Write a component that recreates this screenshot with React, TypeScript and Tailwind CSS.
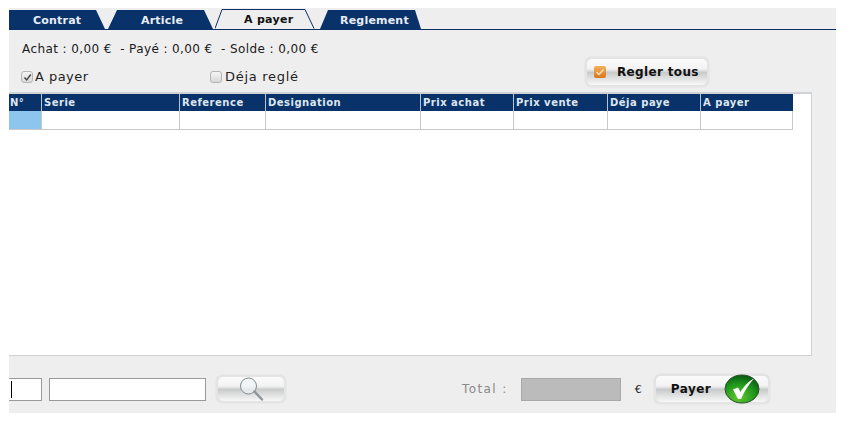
const font = "font-['DejaVu_Sans',sans-serif]";

const glossy =
  "bg-[linear-gradient(to_bottom,#fbfbfb_0%,#f3f3f3_38%,#c9cbcb_52%,#d9dada_68%,#f8f8f8_100%)] border-2 border-[#e4e4e4] rounded-[7px] shadow-[0_0_1px_#bbbbbb]";

const columns = [
  { label: "N°", w: "w-[32px]" },
  { label: "Serie", w: "w-[138px]" },
  { label: "Reference", w: "w-[86px]" },
  { label: "Designation", w: "w-[155px]" },
  { label: "Prix achat", w: "w-[93px]" },
  { label: "Prix vente", w: "w-[94px]" },
  { label: "Déja paye", w: "w-[93px]" },
  { label: "A payer", w: "w-[93px]" },
];

function Tabs() {
  return (
    <div className="flex h-[22px] shrink-0 items-end border-b border-[#0c2f66]">
      <div className="flex h-[19px] w-[96px] items-center bg-[#083269] pl-6 pt-[3px] text-[11px] font-bold tracking-[0.2px] text-[#e8edf4] [clip-path:polygon(0_0,87px_0,100%_100%,0_100%)]">
        Contrat
      </div>
      <div className="ml-[3px] flex h-[19px] w-[105px] items-center bg-[#083269] pl-[33px] pt-[3px] text-[11px] font-bold tracking-[0.2px] text-[#e8edf4] [clip-path:polygon(9px_0,96px_0,100%_100%,0_100%)]">
        Article
      </div>
      <div className="relative ml-[2px] flex h-5 w-[100px] items-center pl-[29px] pt-[3px] text-[11px] font-bold tracking-[0.3px] text-[#111111]">
        <svg className="absolute left-0 top-0" width="100" height="20" viewBox="0 0 100 20" fill="none">
          <path d="M0 19.5 L7 0.5 H90 L99 19.5" stroke="#0c2f66" strokeWidth="1" />
        </svg>
        A payer
      </div>
      <div className="ml-[5px] flex h-[19px] w-[101px] items-center bg-[#083269] pl-[20px] pt-[3px] text-[11px] font-bold tracking-[0.2px] text-[#e8edf4] [clip-path:polygon(8px_0,95px_0,100%_100%,0_100%)]">
        Reglement
      </div>
    </div>
  );
}

function CheckMark({ checked, className }: { checked?: boolean; className: string }) {
  return (
    <span
      className={`flex h-3 w-3 items-center justify-center rounded-[3px] border border-[#b5b5b5] bg-[linear-gradient(to_bottom,#f4f4f4,#d8d8d8)] ${className}`}
    >
      {checked && (
        <svg width="9" height="9" viewBox="0 0 9 9" fill="none">
          <path d="M1.5 4.5 L3.7 7 L7.8 1.5" stroke="#444444" strokeWidth="1.4" />
        </svg>
      )}
    </span>
  );
}

function OrangeCheck() {
  return (
    <svg width="14" height="14" viewBox="0 0 14 14" fill="none">
      <defs>
        <linearGradient id="orange" x1="0" y1="0" x2="0" y2="1">
          <stop offset="0" stopColor="#f2b25c" />
          <stop offset="1" stopColor="#d9771f" />
        </linearGradient>
      </defs>
      <rect x="1" y="1" width="12" height="12" rx="2" fill="url(#orange)" />
      <path d="M3.5 7 L6 9.5 L10.5 4.5" stroke="#fbe3c0" strokeWidth="1.5" />
    </svg>
  );
}

function GreenCheck() {
  return (
    <svg width="36" height="30" viewBox="0 0 36 30" fill="none">
      <defs>
        <radialGradient id="green" cx="0.4" cy="0.8" r="0.8">
          <stop offset="0" stopColor="#63c82f" />
          <stop offset="0.6" stopColor="#1f981c" />
          <stop offset="1" stopColor="#075a10" />
        </radialGradient>
      </defs>
      <ellipse cx="18" cy="15" rx="17" ry="14" fill="url(#green)" stroke="#2c4f2c" strokeWidth="1" />
      <path d="M9 15.5 L14 13.5 L16.5 18 C20 12 25 7 30 4.5 C25 10 20.5 17 17 25 L14 25 Z" fill="#ffffff" />
    </svg>
  );
}

function Magnifier() {
  return (
    <svg width="26" height="26" viewBox="0 0 26 26" fill="none">
      <circle cx="10.5" cy="10" r="8" fill="#eef3f6" fillOpacity="0.7" stroke="#7f8c90" strokeWidth="1" />
      <path d="M16.5 15.5 L24 23.5" stroke="#8c9598" strokeWidth="2.4" strokeLinecap="round" />
    </svg>
  );
}

export default function App() {
  return (
    <div className={`h-[423px] w-[847px] overflow-hidden bg-white pl-[9px] pt-2 ${font}`}>
      <div className="flex h-[405px] w-[827px] flex-col bg-[#eeeeee]">
        <Tabs />

        <div className="flex h-[62px] shrink-0 justify-between pr-[127px]">
          <div className="flex flex-col">
            <p className="ml-[13px] mt-[12px] text-[12px] leading-[14px] tracking-[0.4px] text-[#1a1a1a]">
              Achat : 0,00 € &nbsp;- Payé : 0,00 € &nbsp;- Solde : 0,00 €
            </p>
            <div className="ml-[12px] mt-[13px] flex items-center text-[13px] leading-4 tracking-[0.45px] text-[#1f1f1f]">
              <CheckMark checked className="mr-[2px]" />
              <span className="w-[175px]">A payer</span>
              <CheckMark className="mr-[3px]" />
              <span className="tracking-[0.7px]">Déja reglé</span>
            </div>
          </div>
          <button
            className={`mt-[27px] flex h-[30px] w-[124px] items-center pl-[6px] text-[12px] font-bold text-[#111111] ${glossy}`}
          >
            <OrangeCheck />
            <span className="ml-[10px] tracking-[0.35px]">Regler tous</span>
          </button>
        </div>

        <div className="h-[264px] w-[803px] shrink-0 border-r border-b border-t-2 border-[#cfd3d6] bg-white">
          <div className="flex h-[17px] w-[784px] bg-[#083269] text-[10px] font-bold tracking-[0.5px] text-[#dfe6f0]">
            {columns.map((c, i) => (
              <div key={c.label} className={`h-full ${c.w} ${i === 0 ? "pl-px" : "border-l border-[#b9c3d0] pl-[2px]"} leading-[18px]`}>
                {c.label}
              </div>
            ))}
          </div>
          <div className="flex h-[19px] w-[784px]">
            {columns.map((c, i) => (
              <div
                key={c.label}
                className={`h-full border-b border-[#c8c8c8] ${c.w} ${i === 0 ? "bg-[#8cc6ee]" : "border-l"} ${i === columns.length - 1 ? "border-r" : ""}`}
              />
            ))}
          </div>
        </div>

        <div className="flex flex-1 items-center pt-[9px] text-[12px]">
          <div className="relative h-[23px] w-[33px] border border-l-0 border-[#9a9a9a] bg-white">
            <span className="absolute left-[2px] top-[2px] h-[17px] w-px bg-black" />
          </div>
          <div className="ml-[7px] h-[23px] w-[157px] border border-[#9a9a9a] bg-white" />
          <button className={`ml-[10px] flex h-[28px] w-[70px] items-center justify-center ${glossy}`}>
            <Magnifier />
          </button>
          <span className="ml-[176px] text-[12px] tracking-[1.4px] text-[#8a8a8a]">Total :</span>
          <div className="ml-[13px] h-[23px] w-[100px] border border-[#a8a8a8] bg-[#bbbbbb]" />
          <span className="ml-[14px] mt-[3px] text-[11px] text-[#222222]">€</span>
          <button className={`ml-[12px] flex h-[30px] w-[116px] items-center pl-[15px] text-[12px] font-bold tracking-[0.5px] text-[#111111] ${glossy}`}>
            <span>Payer</span>
            <span className="ml-[13px] flex">
              <GreenCheck />
            </span>
          </button>
        </div>
      </div>
    </div>
  );
}
